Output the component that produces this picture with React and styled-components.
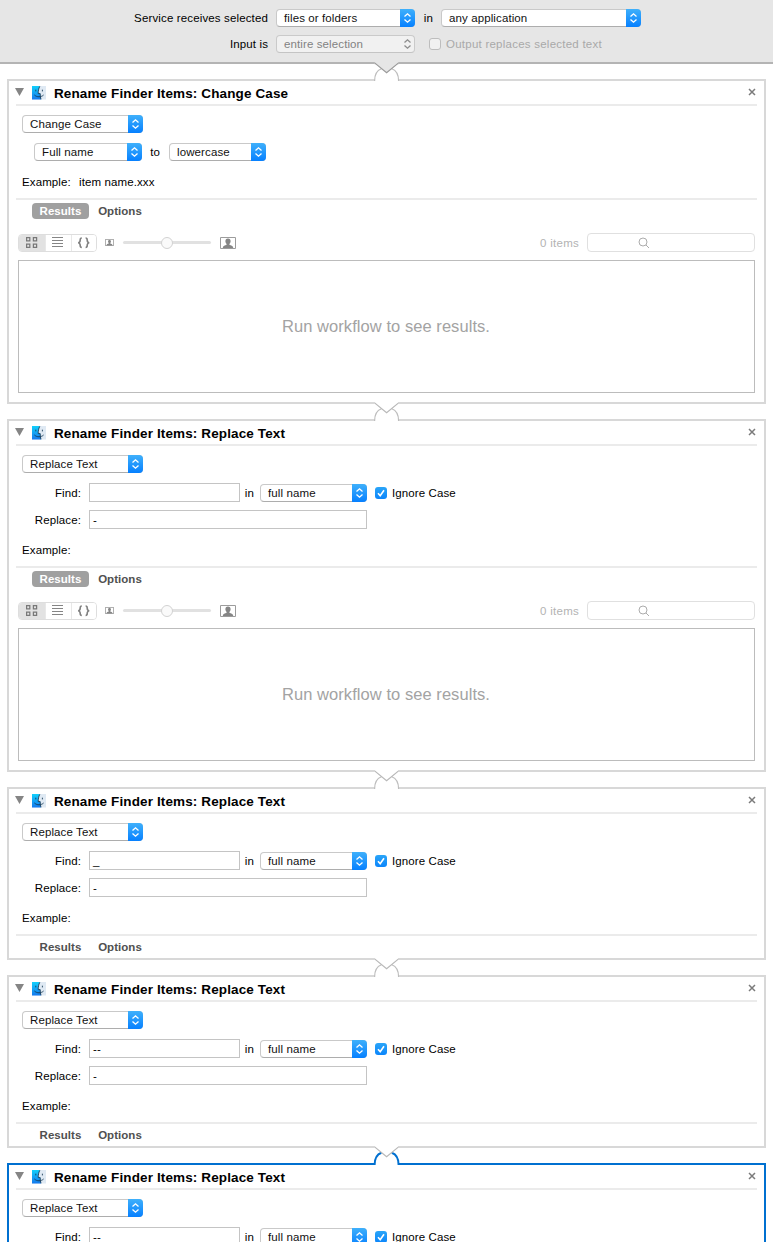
import React from "react";
import styled, { createGlobalStyle, css } from "styled-components";

const GlobalStyle = createGlobalStyle`
  * { box-sizing: border-box; }
  body {
    margin: 0;
    background: #fff;
    overflow: hidden;
    font: 11.5px/14px "Liberation Sans", Arial, sans-serif;
    letter-spacing: 0.11px;
    color: #000;
    white-space: nowrap;
  }
`;

const Window = styled.div`
  width: 773px;
  height: 1242px;
  overflow: hidden;
  display: flex;
  flex-direction: column;
`;

const ServiceBar = styled.header`
  height: 64px;
  flex: none;
  padding-top: 9px;
  background: #e6e6e6;
  border-bottom: 2px solid #b4b4b4;
  display: flex;
  flex-direction: column;
  gap: 8px;
`;

const Row = styled.div`
  display: flex;
  align-items: center;
  height: ${(p) => p.$h || 18}px;
  padding-left: ${(p) => p.$indent || 0}px;
  margin-top: ${(p) => p.$top || 0}px;
`;

const Label = styled.span`
  width: ${(p) => p.$w}px;
  text-align: ${(p) => p.$align || "left"};
  margin-right: ${(p) => p.$gap || 0}px;
  letter-spacing: ${(p) => p.$track ?? 0.11}px;
  color: ${(p) => (p.$muted ? "#a9a9a9" : "#000")};
`;

const PopupBox = styled.div`
  width: ${(p) => p.$w}px;
  height: 18px;
  flex: none;
  display: flex;
  justify-content: space-between;
  align-items: center;
  padding-left: 7px;
  border: 1px solid ${(p) => (p.$off ? "#cacaca" : "#c9c9c9")};
  border-bottom-color: ${(p) => (p.$off ? "#c4c4c4" : "#adadad")};
  border-radius: 4px;
  background: ${(p) => (p.$off ? "#f1f1f1" : "#fff")};
  color: ${(p) => (p.$off ? "#828282" : "#111")};
`;

const Stepper = styled.span`
  width: 15px;
  height: 18px;
  margin: -1px;
  flex: none;
  border-radius: 0 4px 4px 0;
  display: flex;
  align-items: center;
  justify-content: center;
  background: ${(p) => (p.$off ? "none" : "linear-gradient(#3fb0fb, #0680ff)")};
`;

function Popup({ width, value, off }) {
  return (
    <PopupBox $w={width} $off={off}>
      {value}
      <Stepper $off={off}>
        <svg width="9" height="12" viewBox="0 0 9 12" fill="none" stroke={off ? "#8d8d8d" : "#fff"} strokeWidth="1.3">
          <path d="M1.5 4.6 4.5 1.8 7.5 4.6M1.5 7.4 4.5 10.2 7.5 7.4" />
        </svg>
      </Stepper>
    </PopupBox>
  );
}

const Box = styled.span`
  width: 12px;
  height: 12px;
  flex: none;
  border-radius: 3px;
  margin-right: ${(p) => p.$gap}px;
  display: flex;
  ${(p) =>
    p.$on
      ? css`background: linear-gradient(#2aa5f8, #0b85fb);`
      : css`background: #f1f1f1; border: 1px solid #bdbdbd;`}
`;

const Field = styled.div`
  width: ${(p) => p.$w}px;
  height: 19px;
  flex: none;
  border: 1px solid #c4c4c4;
  padding: 2px 0 0 3px;
`;

const Card = styled.section`
  position: relative;
  flex: none;
  margin: 15px 7px 0;
  border: 2px solid ${(p) => (p.$selected ? "#0070d0" : "#d8d8d8")};
`;

const Notch = styled.svg`
  position: absolute;
  left: 363px;
  top: -20px;
  z-index: 2;
`;

const CardHeader = styled.div`
  height: 23px;
  display: flex;
  align-items: center;
  padding: 0 8px 0 6px;
`;

const Title = styled.h2`
  flex: 1;
  margin: 3px 0 0 8px;
  font-size: 13.5px;
  line-height: 16px;
  font-weight: bold;
  letter-spacing: 0.12px;
`;

const Disclosure = styled.svg`
  margin: 0 8px 1px 0;
`;

const CloseIcon = styled.svg`
  margin-bottom: 2px;
`;

const Rule = styled.hr`
  height: 2px;
  margin: 0 7px;
  border: 0;
  background: #ebebeb;
`;

const Body = styled.div`
  height: ${(p) => p.$h}px;
  padding: 9px 0 0 13px;
`;

const Tabs = styled.div`
  height: ${(p) => (p.$open ? 34 : 22)}px;
  padding: 3px 0 0 23px;
  display: flex;
  gap: 9px;
`;

const Tab = styled.span`
  width: ${(p) => p.$w}px;
  height: 16px;
  line-height: 17px;
  border-radius: 4px;
  text-align: center;
  font-weight: bold;
  letter-spacing: 0.04px;
  color: ${(p) => (p.$on ? "#fff" : "#505050")};
  background: ${(p) => (p.$on ? "#a0a0a0" : "none")};
`;

const Toolbar = styled.div`
  height: 18px;
  padding: 0 9px;
  display: flex;
  align-items: center;
`;

const Segments = styled.div`
  width: 79px;
  height: 18px;
  margin-right: 8px;
  display: flex;
  border: 1px solid #dedede;
  border-radius: 4px;
  overflow: hidden;
`;

const Segment = styled.span`
  width: ${(p) => p.$w}px;
  flex: none;
  display: flex;
  align-items: center;
  justify-content: center;
  background: ${(p) => (p.$on ? "#e2e2e2" : "#fff")};
  & + & { border-left: 1px solid #e8e8e8; }
`;

const Track = styled.div`
  width: 88px;
  height: 3px;
  margin: -1px 9px 0;
  border-radius: 2px;
  background: #e1e1e1;
  display: flex;
  align-items: center;
  justify-content: center;
`;

const Knob = styled.span`
  width: 12px;
  height: 12px;
  flex: none;
  border-radius: 50%;
  background: #fafafa;
  border: 1px solid #d2d2d2;
`;

const PortraitSvg = styled.svg`
  flex: none;
  margin-bottom: 1px;
`;

const Count = styled.span`
  flex: 1;
  text-align: right;
  color: #b3b3b3;
  letter-spacing: 0.26px;
  margin-right: 8px;
`;

const Search = styled.div`
  width: 168px;
  height: 19px;
  margin-top: -1px;
  border: 1px solid #e0e0e0;
  border-radius: 4px;
  padding: 3px 0 0 50px;
`;

const Results = styled.div`
  height: 133px;
  margin: 8px 9px 9px;
  padding: 0 1px 2px 0;
  border: 1px solid #bcbcbc;
  display: flex;
  align-items: center;
  justify-content: center;
  font-size: 16.5px;
  line-height: 20px;
  letter-spacing: 0.06px;
  color: #a3a3a3;
`;

const FinderSvg = styled.svg`
  display: block;
  flex: none;
`;

function FinderIcon() {
  return (
    <FinderSvg width="14" height="14" viewBox="0 0 14 14">
      <defs>
        <linearGradient id="faceBlue" x1="0" y1="0" x2="0" y2="1">
          <stop offset="0" stopColor="#12d0fb" />
          <stop offset="1" stopColor="#1479ee" />
        </linearGradient>
      </defs>
      <rect x="0" y="0" width="14" height="13.5" fill="#dfe9f3" />
      <path d="M0 0H7.8C6.6 2.6 6.2 5 6.2 7.6H8.2C8.1 9.6 8.4 11.6 9 13.5H0Z" fill="url(#faceBlue)" />
      <path d="M7.8 .3C6.6 2.6 6.2 5 6.2 7.6H8.2C8.1 9.6 8.4 11.6 9 13.3M2.4 9C5 11.4 9 11.4 11.6 9M3.8 3.7V5.4M10.4 3.7V5.4" fill="none" stroke="#12344f" strokeWidth=".85" />
    </FinderSvg>
  );
}

function Portrait({ width, height }) {
  return (
    <PortraitSvg width={width} height={height} viewBox="0 0 16 12" preserveAspectRatio="none">
      <rect x=".5" y=".5" width="15" height="11" fill="#fff" stroke="#9c9c9c" vectorEffect="non-scaling-stroke" />
      <path d="M8 1.6C6.2 1.6 5.3 2.8 5.4 4.4 5.5 5.7 6.1 6.3 6.6 6.9V7.8C5 8.5 3 8.8 2.7 11H13.3C13 8.8 11 8.5 9.4 7.8V6.9C9.9 6.3 10.5 5.7 10.6 4.4 10.7 2.8 9.8 1.6 8 1.6Z" fill="#858585" />
    </PortraitSvg>
  );
}

function Connector({ selected, first }) {
  const line = selected ? "#0070d0" : "#bdbdbd";
  return (
    <Notch width="29" height="21" viewBox="0 0 29 21">
      <path d="M3 3.5V21H26.5V3.5Z" fill="#fff" />
      <path d="M2.3 1V3.5H27V1Z" fill={first ? "#e6e6e6" : "#fff"} />
      <path
        d="M2.6 20C2.6 14 5 9.4 9.4 7.8M26.6 20C26.6 14 24.2 9.4 19.8 7.8"
        fill="none"
        stroke={line}
        strokeWidth={selected ? 2 : 1.2}
      />
      <path
        d="M2.3 1.6 14.6 11.8 26.9 1.6"
        fill={first ? "#e6e6e6" : "#fff"}
        stroke={first ? "#9a9a9a" : "#b8b8b8"}
        strokeWidth="1.2"
      />
    </Notch>
  );
}

function ResultsPanel() {
  return (
    <>
      <Toolbar>
        <Segments>
          <Segment $on $w={26}>
            <svg width="12" height="12" viewBox="0 0 12 12" fill="none" stroke="#787878" strokeWidth="1.25">
              <path d="M.6.6H3.8V3.8H.6ZM7.4.6H10.6V3.8H7.4ZM.6 7.2H3.8V10.4H.6ZM7.4 7.2H10.6V10.4H7.4Z" />
            </svg>
          </Segment>
          <Segment $w={26}>
            <svg width="13" height="12" viewBox="0 0 13 12" stroke="#858585">
              <path d="M0 .5H11M0 3.5H11M0 6.5H11M0 9.5H11" />
            </svg>
          </Segment>
          <Segment $w={25}>
            <svg width="14" height="12" viewBox="0 0 14 12" fill="none" stroke="#808080" strokeWidth="1.6">
              <path d="M4.8 1C3.2 1 3.2 1.7 3.2 3 3.2 4.7 2.9 5.5 1.2 5.8 2.9 6.1 3.2 6.9 3.2 8.6 3.2 10 3.2 10.5 4.8 10.5M8.6 1C10.2 1 10.2 1.7 10.2 3 10.2 4.7 10.5 5.5 12.2 5.8 10.5 6.1 10.2 6.9 10.2 8.6 10.2 10 10.2 10.5 8.6 10.5" />
            </svg>
          </Segment>
        </Segments>
        <Portrait width={9} height={7} />
        <Track><Knob /></Track>
        <Portrait width={16} height={12} />
        <Count>0 items</Count>
        <Search>
          <svg width="12" height="12" viewBox="0 0 12 12" fill="none" stroke="#acacac">
            <circle cx="5" cy="5" r="4" />
            <path d="M8 8 11 11" />
          </svg>
        </Search>
      </Toolbar>
      <Results>Run workflow to see results.</Results>
    </>
  );
}

function Action({ title, bodyHeight, open, selected, first, children }) {
  return (
    <Card $selected={selected}>
      <Connector selected={selected} first={first} />
      <CardHeader>
        <Disclosure width="9" height="8" viewBox="0 0 9 8">
          <path d="M0 0H9L4.5 8Z" fill="#858585" />
        </Disclosure>
        <FinderIcon />
        <Title>{title}</Title>
        <CloseIcon width="8" height="8" viewBox="0 0 8 8" stroke="#7b7b7b" strokeWidth="1.5">
          <path d="M1 1 7 7M7 1 1 7" />
        </CloseIcon>
      </CardHeader>
      <Rule />
      <Body $h={bodyHeight}>{children}</Body>
      <Rule />
      <Tabs $open={open}>
        <Tab $w={57} $on={open}>Results</Tab>
        <Tab $w={44}>Options</Tab>
      </Tabs>
      {open && <ResultsPanel />}
    </Card>
  );
}

function ReplaceText({ find, ...rest }) {
  return (
    <Action title="Rename Finder Items: Replace Text" bodyHeight={120} {...rest}>
      <Row><Popup width={121} value="Replace Text" /></Row>
      <Row $h={19} $top={10}>
        <Label $w={59} $align="right" $gap={8}>Find:</Label>
        <Field $w={151}>{find}</Field>
        <Label $w={14} $align="right" $gap={6}>in</Label>
        <Popup width={107} value="full name" />
        <Label $gap={8} />
        <Box $on $gap={5}>
          <svg width="12" height="12" viewBox="0 0 12 12" fill="none" stroke="#fff" strokeWidth="1.6">
            <path d="M3 6.2 5.2 8.7 9 3.2" />
          </svg>
        </Box>
        <Label>Ignore Case</Label>
      </Row>
      <Row $h={19} $top={8}>
        <Label $w={59} $align="right" $gap={8}>Replace:</Label>
        <Field $w={278}>-</Field>
      </Row>
      <Row $top={12}><Label>Example:</Label></Row>
    </Action>
  );
}

export default function App() {
  return (
    <Window>
      <GlobalStyle />
      <ServiceBar>
        <Row>
          <Label $w={268} $align="right" $gap={8} $track={0.14}>Service receives selected</Label>
          <Popup width={139} value="files or folders" />
          <Label $w={18} $align="right" $gap={8}>in</Label>
          <Popup width={200} value="any application" />
        </Row>
        <Row>
          <Label $w={268} $align="right" $gap={8}>Input is</Label>
          <Popup width={139} value="entire selection" off />
          <Label $gap={14} />
          <Box $gap={5} />
          <Label $muted $track={0.24}>Output replaces selected text</Label>
        </Row>
      </ServiceBar>
      <Action title="Rename Finder Items: Change Case" bodyHeight={92} open first>
        <Row><Popup width={121} value="Change Case" /></Row>
        <Row $indent={12} $top={10}>
          <Popup width={108} value="Full name" />
          <Label $w={18} $align="right" $gap={9}>to</Label>
          <Popup width={97} value="lowercase" />
        </Row>
        <Row $top={12}>
          <Label $w={57}>Example:</Label>
          <Label>item name.xxx</Label>
        </Row>
      </Action>
      <ReplaceText find="" open />
      <ReplaceText find="_" />
      <ReplaceText find="--" />
      <ReplaceText find="--" selected />
    </Window>
  );
}
